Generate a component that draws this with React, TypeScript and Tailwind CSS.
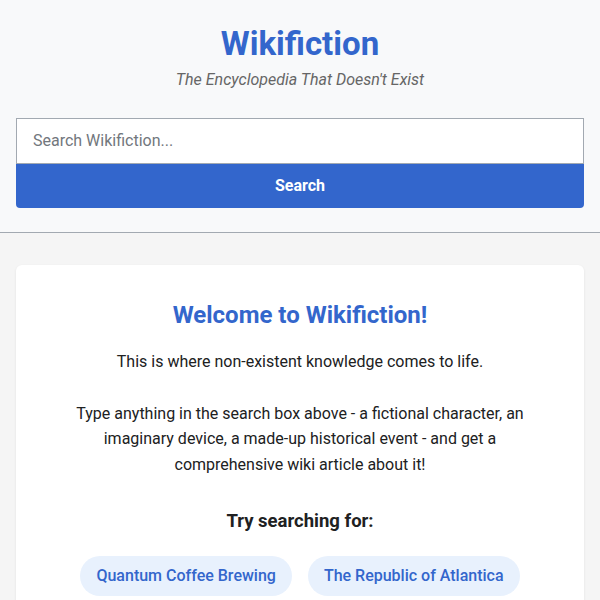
export default function App() {
  const examples = ["Quantum Coffee Brewing", "The Republic of Atlantica"];

  return (
    <div className="min-h-screen bg-[#f5f5f5] font-['Roboto',sans-serif] text-[#202122]">
      <header className="bg-[#f8f9fa] border-b border-[#a2a9b1] px-4 pt-6 pb-6 text-center">
        <h1 className="text-[33px] leading-[1.2] font-bold text-[#3366cc]">Wikifiction</h1>
        <p className="mt-1 text-base leading-6 italic text-[#666]">The Encyclopedia That Doesn't Exist</p>
        <form className="mt-[26px] flex flex-col" onSubmit={(e) => e.preventDefault()}>
          <input
            type="text"
            placeholder="Search Wikifiction..."
            className="h-[46px] w-full border border-[#a2a9b1] bg-white px-4 text-base text-[#202122] placeholder:text-[#72777d] outline-none"
          />
          <button
            type="submit"
            className="h-11 w-full rounded-b-sm bg-[#3366cc] text-base font-bold text-white"
          >
            Search
          </button>
        </form>
      </header>

      <main className="px-4 pt-8 pb-8">
        <div className="rounded-md bg-white px-8 pt-9 pb-8 text-center shadow-[0_1px_3px_rgba(0,0,0,0.08)]">
          <h2 className="text-2xl leading-[1.2] font-bold text-[#3366cc]">Welcome to Wikifiction!</h2>
          <p className="mt-5 text-base leading-[1.6]">
            This is where non-existent knowledge comes to life.
            <br />
            <br />
            Type anything in the search box above - a fictional character, an imaginary device, a made-up historical
            event - and get a comprehensive wiki article about it!
          </p>
          <h3 className="mt-[33px] text-[18.5px] leading-[1.2] font-bold">Try searching for:</h3>
          <div className="mt-[23px] flex flex-wrap justify-center gap-4">
            {examples.map((ex) => (
              <button
                key={ex}
                className="rounded-full bg-[#e8f1fd] px-4 py-2 text-base leading-6 font-medium text-[#3366cc]"
              >
                {ex}
              </button>
            ))}
          </div>
        </div>
      </main>
    </div>
  );
}
